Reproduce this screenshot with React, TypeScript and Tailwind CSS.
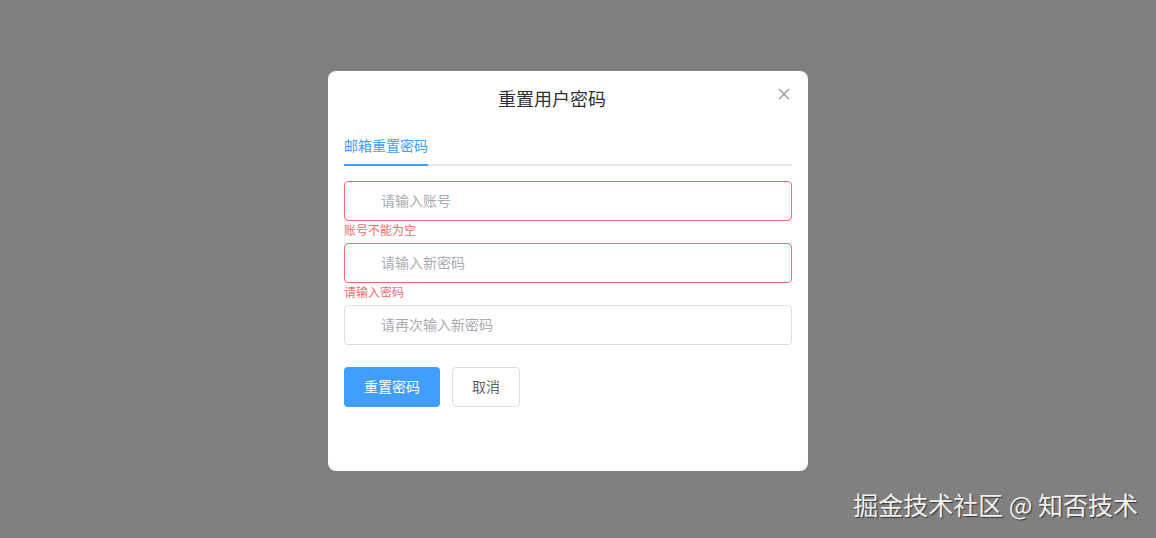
import React from "react";

export default function App() {
  const font = { fontFamily: '"Noto Sans CJK SC", "Noto Sans", sans-serif' };
  return (
    <div className="relative w-[1156px] h-[538px] bg-[#808080] overflow-hidden" style={font}>
      <div className="absolute left-[328px] top-[71px] w-[480px] h-[400px] bg-white rounded-[8px] px-4 pt-4">
        <div className="relative h-6 flex items-start justify-center pr-[32px]">
          <span className="text-[18px] leading-[22px] text-[#303133]">重置用户密码</span>
          <svg className="absolute right-[2px] top-[1px]" width="12" height="12" viewBox="0 0 12 12">
            <path d="M1 1L11 11M11 1L1 11" stroke="#909399" strokeWidth="1.2" />
          </svg>
        </div>
        <div className="mt-[15px] h-10 relative border-b-2 border-[#e4e7ed] flex items-center">
          <span className="text-[14px] text-[#409eff] leading-10">邮箱重置密码</span>
          <div className="absolute left-0 bottom-[-2px] w-[84px] h-[2px] bg-[#409eff]" />
        </div>
        <div className="mt-[15px] flex flex-col">
          <div className="h-10 border border-[#f56c6c] rounded-[4px] flex items-center pl-[36px] pb-[1px] text-[14px] text-[#a8abb2]">请输入账号</div>
          <div className="h-[22px] text-[12px] leading-[18px] text-[#f56c6c]">账号不能为空</div>
          <div className="h-10 border border-[#f56c6c] rounded-[4px] flex items-center pl-[36px] pb-[1px] text-[14px] text-[#a8abb2]">请输入新密码</div>
          <div className="h-[22px] text-[12px] leading-[18px] text-[#f56c6c]">请输入密码</div>
          <div className="h-10 border border-[#dcdfe6] rounded-[4px] flex items-center pl-[36px] pb-[1px] text-[14px] text-[#a8abb2]">请再次输入新密码</div>
        </div>
        <div className="mt-[22px] flex gap-3">
          <button className="h-10 w-[96px] rounded-[4px] bg-[#409eff] text-white text-[14px] pb-[1px]">重置密码</button>
          <button className="h-10 w-[68px] rounded-[4px] bg-white border border-[#dcdfe6] text-[#606266] text-[14px] pb-[1px]">取消</button>
        </div>
      </div>
      <div
        className="absolute right-[18px] bottom-[18px] text-[25px] leading-8 text-[#f2f2f2]"
        style={{ textShadow: "1px 1px 1px #333" }}
      >
        掘金技术社区 @ 知否技术
      </div>
    </div>
  );
}
